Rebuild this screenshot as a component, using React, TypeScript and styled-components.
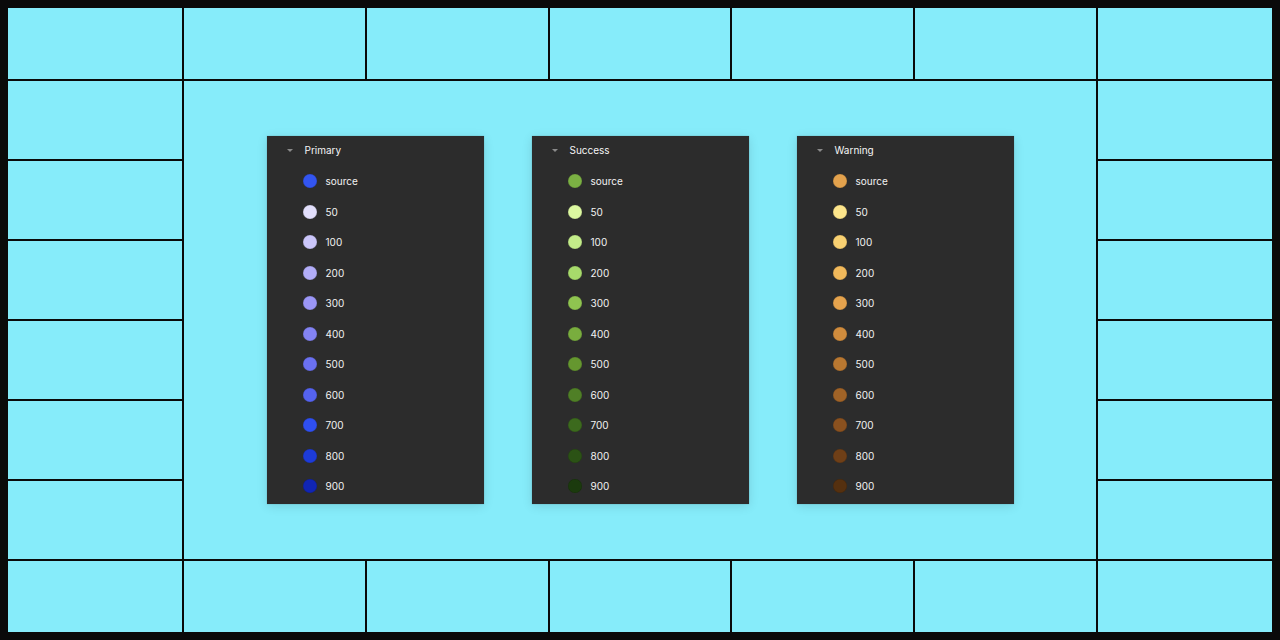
import React from "react";
import styled, { createGlobalStyle } from "styled-components";

const Global = createGlobalStyle`
  html, body { margin: 0; padding: 0; background: #0a0a0a; }
  body { font-family: Inter, "Noto Sans", sans-serif; }
`;

const Board = styled.div`
  width: 1280px;
  height: 640px;
  box-sizing: border-box;
  padding: 8px;
  background: #0a0a0a;
  display: grid;
  grid-template-columns: 174px repeat(5, 1fr) 174px;
  grid-template-rows: 71px repeat(6, 78px) 71px;
  gap: 2px;
`;

const Cell = styled.div`
  background: #86ecfa;
`;

const Stage = styled.div`
  background: #86ecfa;
  grid-column: 2 / 7;
  grid-row: 2 / 8;
  display: flex;
  align-items: center;
  justify-content: center;
  gap: 48px;
`;

const Panel = styled.div`
  width: 217px;
  height: 368px;
  box-sizing: border-box;
  background: #2c2c2c;
  box-shadow: 0 2px 10px rgba(0, 0, 0, 0.12), 0 0 1px rgba(0, 0, 0, 0.3);
  padding-bottom: 2.5px;
  display: flex;
  flex-direction: column;
`;

const Header = styled.div`
  height: 28px;
  margin-bottom: 2px;
  display: flex;
  align-items: center;
  padding-left: 20px;
  color: #f5f5f5;
  font-size: 10px;
  font-weight: 400;
`;

const Caret = styled.span`
  width: 0;
  height: 0;
  border-left: 3px solid transparent;
  border-right: 3px solid transparent;
  border-top: 3.5px solid #8a8a8a;
  margin-right: 12px;
  margin-top: 1px;
`;

const Row = styled.div`
  height: 30.5px;
  display: flex;
  align-items: center;
  padding-left: 36px;
  color: #f2f2f2;
  font-size: 10px;
`;

const Swatch = styled.span<{ $c: string }>`
  width: 14px;
  height: 14px;
  border-radius: 50%;
  background: ${(p) => p.$c};
  box-shadow: inset 0 0 0 0.5px rgba(0, 0, 0, 0.15);
  margin-right: 9px;
  flex: none;
`;

const labels = ["source", "50", "100", "200", "300", "400", "500", "600", "700", "800", "900"];

const palettes: { name: string; colors: string[] }[] = [
  {
    name: "Primary",
    colors: [
      "#3355f0", "#e2dffc", "#cbc6fa", "#b2adf8", "#9b96f6", "#8383f3",
      "#6b71f1", "#5563ef", "#2f4ff0", "#1d3bd8", "#1125b3",
    ],
  },
  {
    name: "Success",
    colors: [
      "#7bb043", "#dcf8a0", "#c3ec89", "#a7da6b", "#8fc450", "#79ad3e",
      "#65972f", "#4f7f26", "#3c6a1d", "#2b5215", "#1b3a0d",
    ],
  },
  {
    name: "Warning",
    colors: [
      "#e3a24d", "#fde58b", "#f9d172", "#f1b95b", "#e5a34d", "#d08c3d",
      "#b97831", "#a06327", "#8a511f", "#6f3f17", "#55300f",
    ],
  },
];

export default function App() {
  const top = Array.from({ length: 7 });
  const sides = Array.from({ length: 11 });
  return (
    <>
      <Global />
      <Board>
        {top.map((_, i) => (
          <Cell key={"t" + i} />
        ))}
        <Cell />
        <Stage>
          {palettes.map((p) => (
            <Panel key={p.name}>
              <Header>
                <Caret />
                {p.name}
              </Header>
              {p.colors.map((c, i) => (
                <Row key={i}>
                  <Swatch $c={c} />
                  {labels[i]}
                </Row>
              ))}
            </Panel>
          ))}
        </Stage>
        {sides.map((_, i) => (
          <Cell key={"s" + i} />
        ))}
        {top.map((_, i) => (
          <Cell key={"b" + i} />
        ))}
      </Board>
    </>
  );
}
